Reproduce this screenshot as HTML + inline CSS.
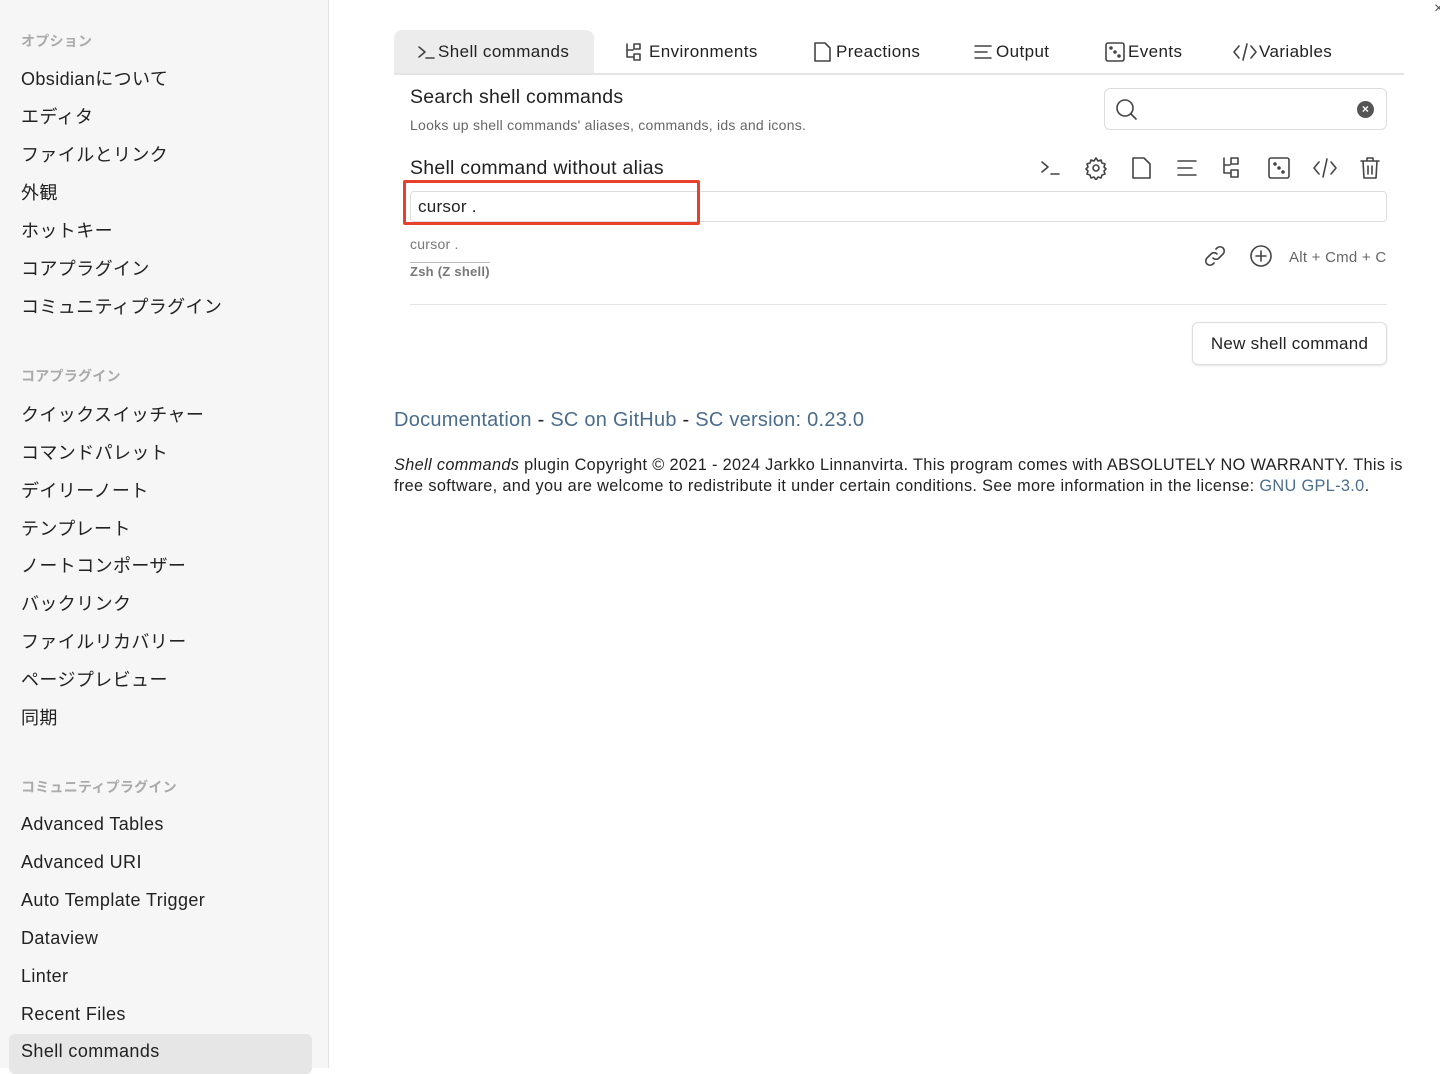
<!DOCTYPE html>
<html><head><meta charset="utf-8"><style>
*{box-sizing:border-box;margin:0;padding:0}
body{width:1440px;height:1068px;overflow:hidden;background:#fff;font-family:"Liberation Sans","Noto Sans CJK JP",sans-serif;color:#222;position:relative;letter-spacing:.25px}
.side{position:absolute;left:0;top:0;width:329px;height:1068px;background:#f6f6f6;border-right:1px solid #e3e3e3}
.h{position:absolute;left:21px;font-size:14px;color:#aaa;font-weight:bold}
.it{position:absolute;left:21px;font-size:18px;color:#222;letter-spacing:.4px}
.sel{position:absolute;left:9px;top:1034px;width:303px;height:40px;background:#e6e6e6;border-radius:6px}
.a{position:absolute}
.tab{position:absolute;top:30px;height:44px;font-size:17px;line-height:44px;color:#222;display:flex;align-items:center;gap:2px;letter-spacing:.4px}
svg{stroke:#444;fill:none;stroke-width:1.6;stroke-linecap:round;stroke-linejoin:round}
.ic{position:absolute;top:156px}
a{color:#4a6d8c;text-decoration:none}
</style></head><body>
<div class="side">
<div class="h" style="top:31px">オプション</div>
<div class="it" style="top:65px">Obsidianについて</div>
<div class="it" style="top:103px">エディタ</div>
<div class="it" style="top:141px">ファイルとリンク</div>
<div class="it" style="top:179px">外観</div>
<div class="it" style="top:217px">ホットキー</div>
<div class="it" style="top:255px">コアプラグイン</div>
<div class="it" style="top:293px">コミュニティプラグイン</div>
<div class="h" style="top:366px">コアプラグイン</div>
<div class="it" style="top:401px">クイックスイッチャー</div>
<div class="it" style="top:439px">コマンドパレット</div>
<div class="it" style="top:477px">デイリーノート</div>
<div class="it" style="top:515px">テンプレート</div>
<div class="it" style="top:552px">ノートコンポーザー</div>
<div class="it" style="top:590px">バックリンク</div>
<div class="it" style="top:628px">ファイルリカバリー</div>
<div class="it" style="top:666px">ページプレビュー</div>
<div class="it" style="top:704px">同期</div>
<div class="h" style="top:777px">コミュニティプラグイン</div>
<div class="sel"></div>
<div class="it" style="top:814px">Advanced Tables</div>
<div class="it" style="top:852px">Advanced URI</div>
<div class="it" style="top:890px">Auto Template Trigger</div>
<div class="it" style="top:928px">Dataview</div>
<div class="it" style="top:966px">Linter</div>
<div class="it" style="top:1004px">Recent Files</div>
<div class="it" style="top:1041px">Shell commands</div>
</div>

<div class="a" style="left:394px;top:30px;width:200px;height:44px;background:#ececec;border-radius:8px 8px 0 0"></div>
<div class="a" style="left:394px;top:73px;width:1010px;height:2px;background:#e4e4e4"></div>
<div class="tab" style="left:416px"><svg width="20" height="20" viewBox="0 0 20 20"><path d="M3 5l6 5-6 5M10 16h8"/></svg>Shell commands</div>
<div class="tab" style="left:625px"><svg width="22" height="22" viewBox="0 0 22 22"><path d="M2 3v13h6M2 9h6M9 3h6v5H9zM9 13h6v6H9z"/></svg>Environments</div>
<div class="tab" style="left:812px"><svg width="22" height="22" viewBox="0 0 22 22"><path d="M3 2h10l5 5v13H3z"/></svg>Preactions</div>
<div class="tab" style="left:972px"><svg width="22" height="22" viewBox="0 0 22 22"><path d="M3 5h16M3 11h12M3 17h16"/></svg>Output</div>
<div class="tab" style="left:1104px"><svg width="22" height="22" viewBox="0 0 22 22"><rect x="2" y="2" width="18" height="18" rx="2"/><circle cx="7" cy="7" r="1" fill="#444"/><circle cx="11" cy="11" r="1" fill="#444"/><circle cx="15" cy="15" r="1" fill="#444"/></svg>Events</div>
<div class="tab" style="left:1233px"><svg width="24" height="20" viewBox="0 0 24 20"><path d="M6 4l-5 6 5 6M18 4l5 6-5 6M14 2l-4 16"/></svg>Variables</div>

<div class="a" style="left:410px;top:86px;font-size:19.5px">Search shell commands</div>
<div class="a" style="left:410px;top:117px;font-size:14px;color:#666">Looks up shell commands' aliases, commands, ids and icons.</div>
<div class="a" style="left:1104px;top:88px;width:283px;height:42px;border:1px solid #ddd;border-radius:6px"></div>
<svg class="a" style="left:1115px;top:98px" width="24" height="24" viewBox="0 0 24 24"><circle cx="10" cy="10" r="8"/><path d="M16 16l5 5"/></svg>
<div class="a" style="left:1357px;top:101px;width:17px;height:17px;border-radius:50%;background:#555;color:#fff;font-size:12px;line-height:17px;text-align:center;font-weight:bold">×</div>

<div class="a" style="left:410px;top:157px;font-size:19.5px">Shell command without alias</div>
<svg class="ic" style="left:1038px" width="24" height="24" viewBox="0 0 24 24"><path d="M4 6l6 5-6 5M13 18h8"/></svg>
<svg class="ic" style="left:1084px" width="24" height="24" viewBox="0 0 24 24"><circle cx="12" cy="12" r="3"/><path d="M12 2l2 3 3-1 1 3 3 1-1 3 2 2-2 2 1 3-3 1-1 3-3-1-2 3-2-3-3 1-1-3-3-1 1-3-2-2 2-2-1-3 3-1 1-3 3 1z"/></svg>
<svg class="ic" style="left:1130px" width="24" height="24" viewBox="0 0 24 24"><path d="M3 2h11l6 6v14H3z"/></svg>
<svg class="ic" style="left:1175px" width="24" height="24" viewBox="0 0 24 24"><path d="M3 5h18M3 12h14M3 19h18"/></svg>
<svg class="ic" style="left:1221px" width="24" height="24" viewBox="0 0 24 24"><path d="M3 2v15h6M3 9h6M10 2h7v6h-7zM10 14h7v7h-7z"/></svg>
<svg class="ic" style="left:1267px" width="24" height="24" viewBox="0 0 24 24"><rect x="2" y="2" width="20" height="20" rx="2"/><circle cx="8" cy="8" r="1" fill="#444"/><circle cx="16" cy="16" r="1" fill="#444"/><circle cx="12" cy="12" r="1" fill="#444"/></svg>
<svg class="ic" style="left:1312px" width="26" height="24" viewBox="0 0 26 24"><path d="M7 6l-5 6 5 6M19 6l5 6-5 6M15 3l-4 18"/></svg>
<svg class="ic" style="left:1358px" width="24" height="24" viewBox="0 0 24 24"><path d="M3 5h18M9 5V2h6v3M5 5l1 17h12l1-17M10 10v8M14 10v8"/></svg>

<div class="a" style="left:410px;top:191px;width:977px;height:31px;border:1px solid #ddd;border-radius:4px"></div>
<div class="a" style="left:403px;top:180px;width:297px;height:45px;border:3px solid #e8402c;border-radius:2px"></div>
<div class="a" style="left:418px;top:197px;font-size:17px">cursor .</div>
<div class="a" style="left:410px;top:236px;font-size:14px;color:#777">cursor .</div>
<div class="a" style="left:410px;top:262px;width:80px;height:1px;background:#bbb"></div>
<div class="a" style="left:410px;top:264px;font-size:13px;color:#777;font-weight:bold">Zsh (Z shell)</div>
<svg class="a" style="left:1203px;top:244px" width="24" height="24" viewBox="0 0 24 24"><path d="M10 14a4 4 0 0 0 6 0l4-4a4 4 0 0 0-6-6l-1 1M14 10a4 4 0 0 0-6 0l-4 4a4 4 0 0 0 6 6l1-1"/></svg>
<svg class="a" style="left:1249px;top:244px" width="24" height="24" viewBox="0 0 24 24"><circle cx="12" cy="12" r="10"/><path d="M12 7v10M7 12h10"/></svg>
<div class="a" style="left:1289px;top:249px;font-size:15px;color:#666">Alt + Cmd + C</div>
<div class="a" style="left:410px;top:304px;width:977px;height:1px;background:#e4e4e4"></div>
<div class="a" style="left:1192px;top:322px;width:195px;height:43px;border:1px solid #ddd;border-radius:6px;box-shadow:0 1px 2px rgba(0,0,0,.1);font-size:17px;line-height:42px;text-align:center">New shell command</div>

<div class="a" style="left:394px;top:409px;font-size:20px"><a>Documentation</a> - <a>SC on GitHub</a> - <a>SC version: 0.23.0</a></div>
<div class="a" style="left:394px;top:455px;width:1012px;font-size:16.3px;line-height:21px;letter-spacing:.35px"><i>Shell commands</i> plugin Copyright © 2021 - 2024 Jarkko Linnanvirta. This program comes with ABSOLUTELY NO WARRANTY. This is free software, and you are welcome to redistribute it under certain conditions. See more information in the license: <a>GNU GPL-3.0</a>.</div>
<div class="a" style="left:1434px;top:0;font-size:16px;color:#555">×</div>
</body></html>
